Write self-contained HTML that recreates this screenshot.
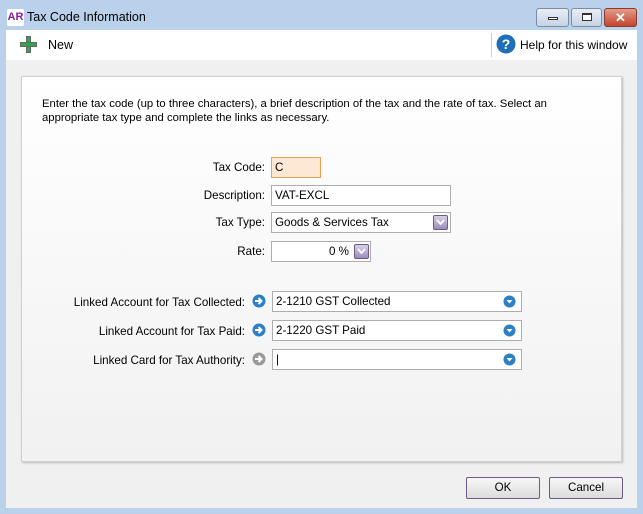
<!DOCTYPE html>
<html><head><meta charset="utf-8"><style>
*{margin:0;padding:0;box-sizing:border-box}
body{width:643px;height:514px;overflow:hidden;background:#b9d1ea;font-family:"Liberation Sans",sans-serif;font-size:11.6px;color:#000;position:relative}
.abs{position:absolute}
.title{left:27px;top:10px;font-size:12.5px;color:#000}
.logo{left:7px;top:9px;width:17px;height:17px;background:#fff;border-radius:2px;font-weight:bold;font-size:11px;color:#8a1fa0;text-align:center;line-height:17px}
.wbtn{top:8px;height:19px;border:1px solid #7c8ba0;border-radius:3px;background:linear-gradient(#e8eef6,#c6d3e3)}
.toolbar{left:6px;top:30px;width:631px;height:30px;background:#fff}
.body{left:6px;top:60px;width:631px;height:448px;background:#f0f0f0}
.panel{left:21px;top:76px;width:601px;height:386px;background:linear-gradient(#fff,#f1f1f1);border:1px solid #d0d0d0;box-shadow:1px 1px 2px #bbb}
.lbl{text-align:right}
.inp{background:#fff;border:1px solid #abadb3;height:21px;padding:3px 3px}
.btn{top:477px;width:74px;height:22px;border:1px solid #6d5a8a;border-radius:2px;background:linear-gradient(#f7f7f7,#dcdcdc);text-align:center;line-height:20px}
.dd{width:15px;height:15px;border:1px solid #6b5a8a;border-radius:2px;background:linear-gradient(#d9d0e6,#9c8cba)}
.dd svg{display:block;margin:3px 0 0 2px}
</style></head><body>
<div class="abs logo">AR</div>
<div class="abs title">Tax Code Information</div>
<div class="abs wbtn" style="left:536px;width:33px"><div style="margin:8px auto 0;width:10px;height:3px;border:1px solid #333;background:#fff"></div></div>
<div class="abs wbtn" style="left:571px;width:31px"><div style="margin:4px auto 0;width:10px;height:8px;border:1px solid #333;border-top-width:2px;background:#fff"></div></div>
<div class="abs wbtn" style="left:604px;width:33px;background:linear-gradient(#e79a8a,#c3452f);border-color:#8b3a2e;color:#fff;font-weight:bold;text-align:center;line-height:17px;font-size:13px">✕</div>
<div class="abs toolbar"></div>
<div class="abs" style="left:20px;top:36px;width:17px;height:17px">
 <div class="abs" style="left:6px;top:0;width:5px;height:17px;background:#2da84a;border:1px solid #666"></div>
 <div class="abs" style="left:0;top:6px;width:17px;height:5px;background:#2da84a;border:1px solid #666"></div>
 <div class="abs" style="left:7px;top:7px;width:3px;height:3px;background:#2da84a"></div>
</div>
<div class="abs" style="left:48px;top:38px;font-size:12.5px">New</div>
<div class="abs" style="left:491px;top:33px;width:1px;height:24px;background:#ccc"></div>
<svg class="abs" style="left:496px;top:34px" width="20" height="20"><circle cx="10" cy="10" r="9.5" fill="#1f6fb8"/><text x="10" y="15" fill="#fff" font-size="14" font-weight="bold" text-anchor="middle" font-family="Liberation Sans">?</text></svg>
<div class="abs" style="left:520px;top:38px;font-size:12px">Help for this window</div>
<div class="abs body"></div>
<div class="abs panel"></div>
<div class="abs" style="left:42px;top:97px;line-height:14px;width:560px;font-size:11.3px">Enter the tax code (up to three characters), a brief description of the tax and the rate of tax. Select an appropriate tax type and complete the links as necessary.</div>

<div class="abs lbl" style="left:150px;width:115px;top:161px">Tax Code:</div>
<div class="abs inp" style="left:271px;top:157px;width:50px;background:#fde8d6;border-color:#f0a050">C</div>
<div class="abs lbl" style="left:150px;width:115px;top:189px">Description:</div>
<div class="abs inp" style="left:271px;top:185px;width:180px">VAT-EXCL</div>
<div class="abs lbl" style="left:150px;width:115px;top:216px">Tax Type:</div>
<div class="abs inp" style="left:271px;top:212px;width:180px">Goods &amp; Services Tax</div>
<div class="abs dd" style="left:433px;top:215px"><svg width="9" height="7"><path d="M1 1l3.5 4 3.5-4" stroke="#fff" stroke-width="1.8" fill="none"/></svg></div>
<div class="abs lbl" style="left:150px;width:115px;top:245px">Rate:</div>
<div class="abs inp" style="left:271px;top:241px;width:100px;text-align:right;padding-right:21px">0 %</div>
<div class="abs dd" style="left:354px;top:244px"><svg width="9" height="7"><path d="M1 1l3.5 4 3.5-4" stroke="#fff" stroke-width="1.8" fill="none"/></svg></div>

<div class="abs lbl" style="left:40px;width:205px;top:296px">Linked Account for Tax Collected:</div>
<div class="abs inp" style="left:272px;top:291px;width:250px">2-1210 GST Collected</div>
<div class="abs lbl" style="left:40px;width:205px;top:325px">Linked Account for Tax Paid:</div>
<div class="abs inp" style="left:272px;top:320px;width:250px">2-1220 GST Paid</div>
<div class="abs lbl" style="left:40px;width:205px;top:354px">Linked Card for Tax Authority:</div>
<div class="abs inp" style="left:272px;top:349px;width:250px">|</div>

<svg class="abs" style="left:252px;top:294px" width="14" height="14"><circle cx="7" cy="7" r="6.5" fill="#2f7fc6"/><path d="M3 7h6M6.5 4l3 3-3 3" stroke="#fff" stroke-width="2" fill="none"/></svg>
<svg class="abs" style="left:252px;top:323px" width="14" height="14"><circle cx="7" cy="7" r="6.5" fill="#2f7fc6"/><path d="M3 7h6M6.5 4l3 3-3 3" stroke="#fff" stroke-width="2" fill="none"/></svg>
<svg class="abs" style="left:252px;top:352px" width="14" height="14"><circle cx="7" cy="7" r="6.5" fill="#999"/><path d="M3 7h6M6.5 4l3 3-3 3" stroke="#fff" stroke-width="2" fill="none"/></svg>
<svg class="abs" style="left:503px;top:295px" width="13" height="13"><circle cx="6.5" cy="6.5" r="6" fill="#2f7fc6"/><path d="M3.5 5h6l-3 3.5z" fill="#fff"/></svg>
<svg class="abs" style="left:503px;top:324px" width="13" height="13"><circle cx="6.5" cy="6.5" r="6" fill="#2f7fc6"/><path d="M3.5 5h6l-3 3.5z" fill="#fff"/></svg>
<svg class="abs" style="left:503px;top:353px" width="13" height="13"><circle cx="6.5" cy="6.5" r="6" fill="#2f7fc6"/><path d="M3.5 5h6l-3 3.5z" fill="#fff"/></svg>

<div class="abs btn" style="left:466px">OK</div>
<div class="abs btn" style="left:549px">Cancel</div>
</body></html>
